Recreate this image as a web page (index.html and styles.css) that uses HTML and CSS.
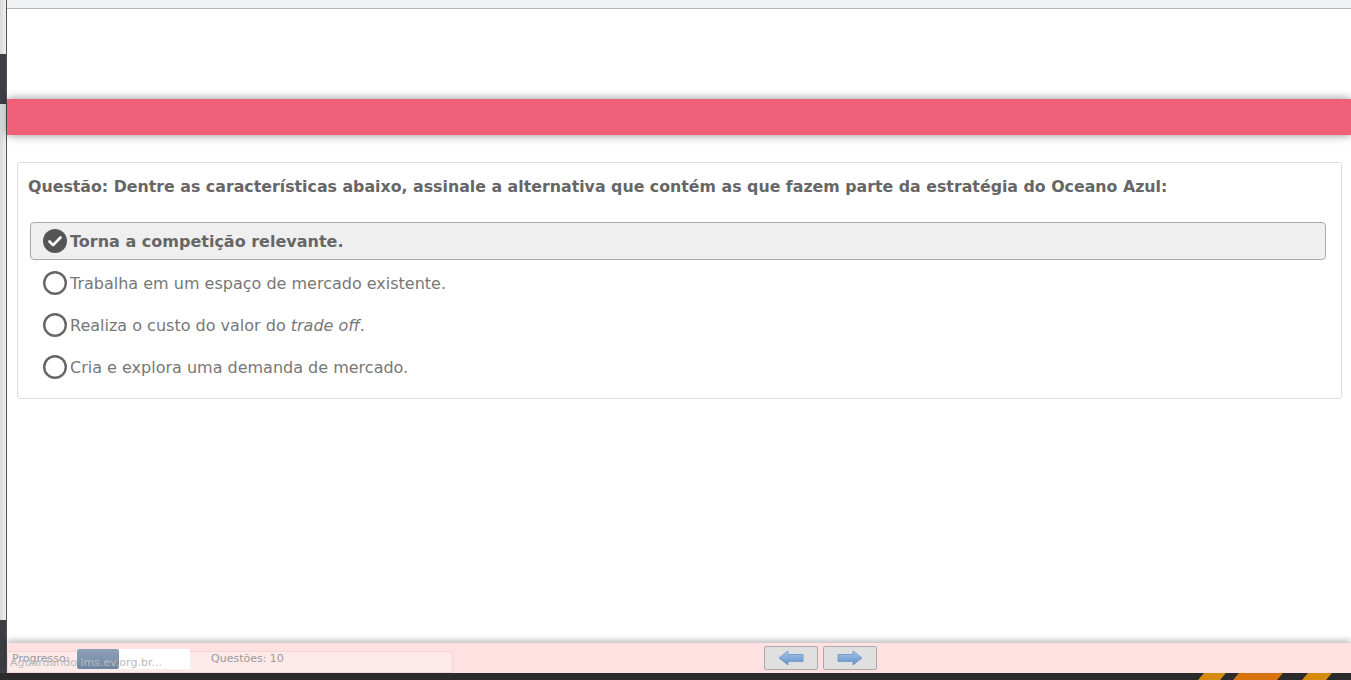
FILE: index.html
```html
<!DOCTYPE html>
<html lang="pt-BR">
<head>
    <meta charset="UTF-8">
    <title>Questão</title>
    <link rel="stylesheet" href="styles.css">
</head>
<body>
    <div class="frame">
        <div class="side">
            <div class="side-dark top"></div>
            <div class="side-gap"></div>
            <div class="side-dark bottom"></div>
        </div>
        <div class="main">
            <div class="urlbar"></div>
            <div class="content">
                <div class="header"></div>
                <div class="card">
                    <p class="question">Questão: Dentre as características abaixo, assinale a alternativa que contém as que fazem parte da estratégia do Oceano Azul:</p>
                    <ul class="options">
                        <li class="option selected">
                            <svg class="radio" viewBox="0 0 24 24" width="24" height="24">
                                <circle cx="12" cy="12" r="12" fill="#555"/>
                                <path d="M6.5 12.5l3.6 3.6 7.4-7.6" fill="none" stroke="#fff" stroke-width="2.6" stroke-linecap="round" stroke-linejoin="round"/>
                            </svg>
                            <span>Torna a competição relevante.</span>
                        </li>
                        <li class="option">
                            <svg class="radio" viewBox="0 0 24 24" width="24" height="24">
                                <circle cx="12" cy="12" r="10.8" fill="none" stroke="#666" stroke-width="2.4"/>
                            </svg>
                            <span>Trabalha em um espaço de mercado existente.</span>
                        </li>
                        <li class="option">
                            <svg class="radio" viewBox="0 0 24 24" width="24" height="24">
                                <circle cx="12" cy="12" r="10.8" fill="none" stroke="#666" stroke-width="2.4"/>
                            </svg>
                            <span>Realiza o custo do valor do <em>trade off</em>.</span>
                        </li>
                        <li class="option">
                            <svg class="radio" viewBox="0 0 24 24" width="24" height="24">
                                <circle cx="12" cy="12" r="10.8" fill="none" stroke="#666" stroke-width="2.4"/>
                            </svg>
                            <span>Cria e explora uma demanda de mercado.</span>
                        </li>
                    </ul>
                </div>
            </div>
            <div class="footer">
                <div class="status">
                    <span class="label">Progresso:</span>
                    <div class="progress"><div class="progress-fill"></div></div>
                    <span class="loading">Aguardando lms.ev.org.br...</span>
                    <span class="count">Questões: 10</span>
                </div>
                <div class="nav">
                    <button class="nav-btn" title="Anterior">
                        <svg viewBox="0 0 28 16" width="28" height="16">
                            <defs>
                                <linearGradient id="ga" x1="0" y1="0" x2="0" y2="1">
                                    <stop offset="0" stop-color="#a9c8ea"/>
                                    <stop offset="1" stop-color="#5d8fc8"/>
                                </linearGradient>
                            </defs>
                            <path d="M2 8L11 1V4.5H26V11.5H11V15Z" fill="url(#ga)" stroke="#6d94c2" stroke-width="0.8"/>
                        </svg>
                    </button>
                    <button class="nav-btn" title="Próxima">
                        <svg viewBox="0 0 28 16" width="28" height="16">
                            <path d="M26 8L17 1V4.5H2V11.5H17V15Z" fill="url(#ga)" stroke="#6d94c2" stroke-width="0.8"/>
                        </svg>
                    </button>
                </div>
            </div>
        </div>
    </div>
    <div class="taskbar">
        <span class="stripe s1"></span>
        <span class="stripe s2"></span>
        <span class="stripe s3"></span>
    </div>
</body>
</html>
```

FILE: styles.css
```css
* {
    box-sizing: border-box;
}
body {
    margin: 0;
    height: 680px;
    overflow: hidden;
    display: flex;
    flex-direction: column;
    font-family: "DejaVu Sans", Verdana, sans-serif;
    background: #fff;
}
.frame {
    display: flex;
    flex: 1;
    min-height: 0;
}
.side {
    width: 7px;
    display: flex;
    flex-direction: column;
    background: linear-gradient(to right, #d9d9d9, #efefef);
    border-right: 1px solid #505357;
}
.side-dark {
    background: #3b3e43;
}
.side-dark.top {
    margin-top: 54px;
    height: 50px;
}
.side-gap {
    flex: 1;
}
.side-dark.bottom {
    height: 53px;
}
.main {
    flex: 1;
    display: flex;
    flex-direction: column;
    min-width: 0;
}
.urlbar {
    height: 9px;
    background: #f1f2f4;
    border-bottom: 1px solid #b5b5b5;
}
.content {
    flex: 1;
    background: #fff;
}
.header {
    margin-top: 90px;
    height: 36px;
    background: #f06079;
    box-shadow: 0 0 9px rgba(0, 0, 0, 0.45);
}
.card {
    margin: 27px 9px 0 10px;
    border: 1px solid #ddd;
    border-radius: 3px;
    padding: 14px 15px 8px 10px;
}
.question {
    margin: 0 0 25px;
    font-size: 15.8px;
    font-weight: bold;
    color: #666;
    line-height: 20px;
}
.options {
    list-style: none;
    margin: 0;
    padding: 0;
}
.option {
    display: flex;
    align-items: center;
    gap: 3px;
    height: 38px;
    margin: 0 0 4px 2px;
    padding-left: 12px;
    font-size: 16px;
    color: #777;
    border: 1px solid transparent;
    border-radius: 4px;
}
.option em {
    font-style: italic;
}
.option.selected {
    background: #efefef;
    border-color: #aaa;
    font-weight: bold;
    color: #666;
}
.radio {
    flex: none;
}
.footer {
    height: 30px;
    background: #ffe1e1;
    box-shadow: 0 -3px 6px rgba(0, 0, 0, 0.25);
    display: flex;
    align-items: center;
    position: relative;
}
.status {
    position: relative;
    width: 446px;
    height: 22px;
    margin-top: 8px;
    background: #ffeaea;
    border: 1px solid #f6d4d4;
    border-radius: 3px;
    font-size: 11px;
    color: #999;
}
.label {
    position: absolute;
    left: 4px;
    top: 0;
}
.progress {
    position: absolute;
    left: 69px;
    top: -3px;
    width: 113px;
    height: 20px;
    background: #fff;
}
.progress-fill {
    width: 42px;
    height: 100%;
    background: linear-gradient(#8ea1b8, #6f86a3);
    border-radius: 2px;
}
.loading {
    position: absolute;
    left: 2px;
    top: 4px;
    color: #bbb;
}
.count {
    position: absolute;
    left: 203px;
    top: 0;
}
.nav {
    display: flex;
    gap: 5px;
    margin-left: 311px;
}
.nav-btn {
    width: 54px;
    height: 24px;
    padding: 0;
    display: flex;
    align-items: center;
    justify-content: center;
    background: #e0e0e0;
    border: 1px solid #aaa;
    border-radius: 2px;
}
.taskbar {
    height: 7px;
    background: #2b2b2b;
    position: relative;
}
.stripe {
    position: absolute;
    top: 0;
    height: 7px;
    transform: skewX(-40deg);
}
.s1 {
    left: 1201px;
    width: 22px;
    background: #d78a10;
}
.s2 {
    left: 1236px;
    width: 44px;
    background: #d8730c;
}
.s3 {
    left: 1305px;
    width: 24px;
    background: #d78a10;
}
```
